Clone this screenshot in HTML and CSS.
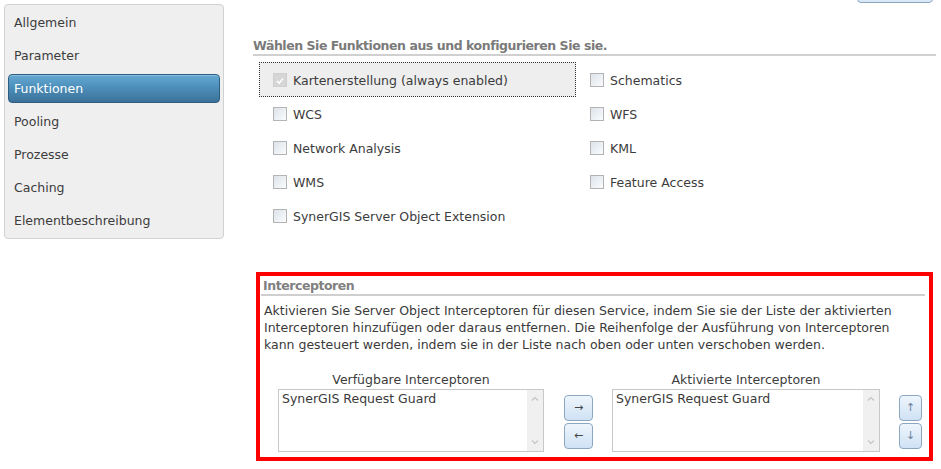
FILE: index.html
```html
<!DOCTYPE html>
<html lang="de">
<head>
<meta charset="utf-8">
<title>Funktionen</title>
<link rel="stylesheet" href="styles.css">
</head>
<body>
<div class="page">
  <nav class="sidebar">
    <div class="nav-item">Allgemein</div>
    <div class="nav-item">Parameter</div>
    <div class="nav-item active">Funktionen</div>
    <div class="nav-item">Pooling</div>
    <div class="nav-item">Prozesse</div>
    <div class="nav-item">Caching</div>
    <div class="nav-item">Elementbeschreibung</div>
  </nav>
  <main class="main">
    <div class="topbar"><button class="top-btn" type="button"></button></div>
    <h2 class="section-title">Wählen Sie Funktionen aus und konfigurieren Sie sie.</h2>
    <div class="features">
      <label class="feature focused"><span class="cb cb-disabled"><svg viewBox="0 0 14 14" width="14" height="14"><path d="M3.5 7.2 L6 9.6 L10.5 4.2" fill="none" stroke="#fff" stroke-width="1.8"/></svg></span><span class="feature-text">Kartenerstellung (always enabled)</span></label>
      <label class="feature"><span class="cb"></span><span class="feature-text">Schematics</span></label>
      <label class="feature"><span class="cb"></span><span class="feature-text">WCS</span></label>
      <label class="feature"><span class="cb"></span><span class="feature-text">WFS</span></label>
      <label class="feature"><span class="cb"></span><span class="feature-text">Network Analysis</span></label>
      <label class="feature"><span class="cb"></span><span class="feature-text">KML</span></label>
      <label class="feature"><span class="cb"></span><span class="feature-text">WMS</span></label>
      <label class="feature"><span class="cb"></span><span class="feature-text">Feature Access</span></label>
      <label class="feature"><span class="cb"></span><span class="feature-text">SynerGIS Server Object Extension</span></label>
    </div>
    <section class="interceptors">
      <h3 class="sub-title">Interceptoren</h3>
      <p class="desc">Aktivieren Sie Server Object Interceptoren für diesen Service, indem Sie sie der Liste der aktivierten Interceptoren hinzufügen oder daraus entfernen. Die Reihenfolge der Ausführung von Interceptoren kann gesteuert werden, indem sie in der Liste nach oben oder unten verschoben werden.</p>
      <div class="lists">
        <div class="list-col">
          <div class="list-label">Verfügbare Interceptoren</div>
          <div class="listbox">
            <div class="list-items"><div class="list-item">SynerGIS Request Guard</div></div>
            <div class="scroll">
              <svg viewBox="0 0 16 16" width="16" height="16"><path d="M5 9.5 L8 6.5 L11 9.5" fill="none" stroke="#c4c4c4" stroke-width="1.2"/></svg>
              <svg viewBox="0 0 16 16" width="16" height="16"><path d="M5 6.5 L8 9.5 L11 6.5" fill="none" stroke="#c4c4c4" stroke-width="1.2"/></svg>
            </div>
          </div>
        </div>
        <div class="btn-col move">
          <button class="arrow-btn" type="button">→</button>
          <button class="arrow-btn" type="button">←</button>
        </div>
        <div class="list-col list-col-2">
          <div class="list-label">Aktivierte Interceptoren</div>
          <div class="listbox">
            <div class="list-items"><div class="list-item">SynerGIS Request Guard</div></div>
            <div class="scroll">
              <svg viewBox="0 0 16 16" width="16" height="16"><path d="M5 9.5 L8 6.5 L11 9.5" fill="none" stroke="#c4c4c4" stroke-width="1.2"/></svg>
              <svg viewBox="0 0 16 16" width="16" height="16"><path d="M5 6.5 L8 9.5 L11 6.5" fill="none" stroke="#c4c4c4" stroke-width="1.2"/></svg>
            </div>
          </div>
        </div>
        <div class="btn-col order">
          <button class="arrow-btn narrow" type="button">↑</button>
          <button class="arrow-btn narrow" type="button">↓</button>
        </div>
      </div>
    </section>
  </main>
</div>
</body>
</html>
```

FILE: styles.css
```css
* { box-sizing: border-box; }

html, body {
  margin: 0;
  padding: 0;
  background: #fff;
}

body {
  font-family: "DejaVu Sans", Verdana, sans-serif;
  font-size: 12.5px;
  line-height: 17px;
  color: #3a3a3a;
}

.page {
  display: flex;
  align-items: flex-start;
  padding: 0 5px 0 4px;
}

/* Sidebar */
.sidebar {
  width: 220px;
  flex: none;
  margin-top: 4px;
  padding: 3px 3px;
  background: #efefef;
  border: 1px solid #d2d2d2;
  border-radius: 4px;
  display: flex;
  flex-direction: column;
  gap: 4px;
}

.nav-item {
  height: 29px;
  line-height: 26px;
  padding: 1px 6px 0 5px;
  border: 1px solid transparent;
  border-radius: 4px;
  color: #3c3c3c;
}

.nav-item.active {
  color: #fff;
  border-color: #2e5d82;
  background: linear-gradient(#64a9d3 0%, #4d8fbb 45%, #3b7299 100%);
  box-shadow: inset 0 1px 0 rgba(255,255,255,0.25);
}

/* Main */
.main {
  flex: 1;
  margin-left: 29px;
  display: flex;
  flex-direction: column;
}

.topbar {
  height: 3px;
  overflow: hidden;
  display: flex;
  justify-content: flex-end;
  align-items: flex-end;
  padding-right: 3px;
}

.top-btn {
  width: 76px;
  height: 24px;
  border: 1px solid #8aa6c4;
  border-radius: 4px;
  background: linear-gradient(#f3f8fd, #d9e8f6);
  padding: 0;
  flex: none;
}

.section-title {
  margin: 34px 0 0;
  font-size: 12.5px;
  line-height: 17px;
  font-weight: bold;
  letter-spacing: -0.45px;
  color: #7a7a7a;
  border-bottom: 2px solid #d0d0d0;
  padding-bottom: 0;
}

/* Feature grid */
.features {
  margin: 7px 0 0 6px;
  display: grid;
  grid-template-columns: 317px 317px;
  grid-auto-rows: 34px;
}

.feature {
  display: flex;
  align-items: center;
  padding-left: 13px;
  border: 1px dotted transparent;
  color: #3c3c3c;
}

.feature.focused {
  border-color: #333;
  background: #eeeeee;
  height: 35px;
  margin-top: -1px;
  padding-top: 1px;
}

.feature-text { white-space: nowrap; }

.cb {
  width: 14px;
  height: 14px;
  flex: none;
  margin-right: 6px;
  border: 1px solid #b3b3b3;
  background: linear-gradient(135deg, #dde3ea 0%, #eef2f6 60%, #fbfcfd 100%);
  display: flex;
}

.cb-disabled {
  border-color: #cfcfcf;
  background: #d6d6d6;
}

.cb-disabled svg { display: block; }

/* Interceptors */
.interceptors {
  margin: 39px 3px 0 3px;
  border: 4px solid #ff0000;
  padding: 1px 4px 5px 1px;
}

.sub-title {
  margin: 0;
  padding-left: 2px;
  font-size: 12.5px;
  line-height: 17px;
  font-weight: bold;
  letter-spacing: -0.45px;
  color: #808080;
  border-bottom: 2px solid #cfcfcf;
}

.desc {
  margin: 6px 22px 0 3px;
  color: #3a3a3a;
}

.lists {
  margin-top: 18px;
  padding-left: 17px;
  display: flex;
  align-items: flex-start;
}

.list-col {
  width: 266px;
  flex: none;
  display: flex;
  flex-direction: column;
}

.list-col-2 { width: 268px; }

.list-label {
  text-align: center;
  line-height: 17px;
  height: 18px;
  color: #3c3c3c;
}

.listbox {
  height: 63px;
  border: 1px solid #c8c8c8;
  background: #fff;
  display: flex;
}

.list-items {
  flex: 1;
  padding: 0 3px;
}

.list-item {
  line-height: 17px;
  color: #3a3a3a;
}

.scroll {
  width: 16px;
  flex: none;
  background: #f0f0f0;
  display: flex;
  flex-direction: column;
  justify-content: space-between;
  padding: 1px 0;
}

.scroll svg { display: block; }

.btn-col {
  flex: none;
  display: flex;
  flex-direction: column;
  gap: 2px;
  margin-top: 24px;
}

.btn-col.move { margin-left: 20px; margin-right: 19px; }
.btn-col.order { margin-left: 19px; }

.arrow-btn {
  width: 29px;
  height: 26px;
  padding: 0;
  border: 1px solid #8ca7c2;
  border-radius: 4px;
  background: linear-gradient(#eef5fc, #cfe2f4);
  font-family: "DejaVu Sans", sans-serif;
  font-size: 11px;
  line-height: 24px;
  color: #444;
}

.arrow-btn.narrow {
  width: 23px;
  color: #6b7f99;
}
```
